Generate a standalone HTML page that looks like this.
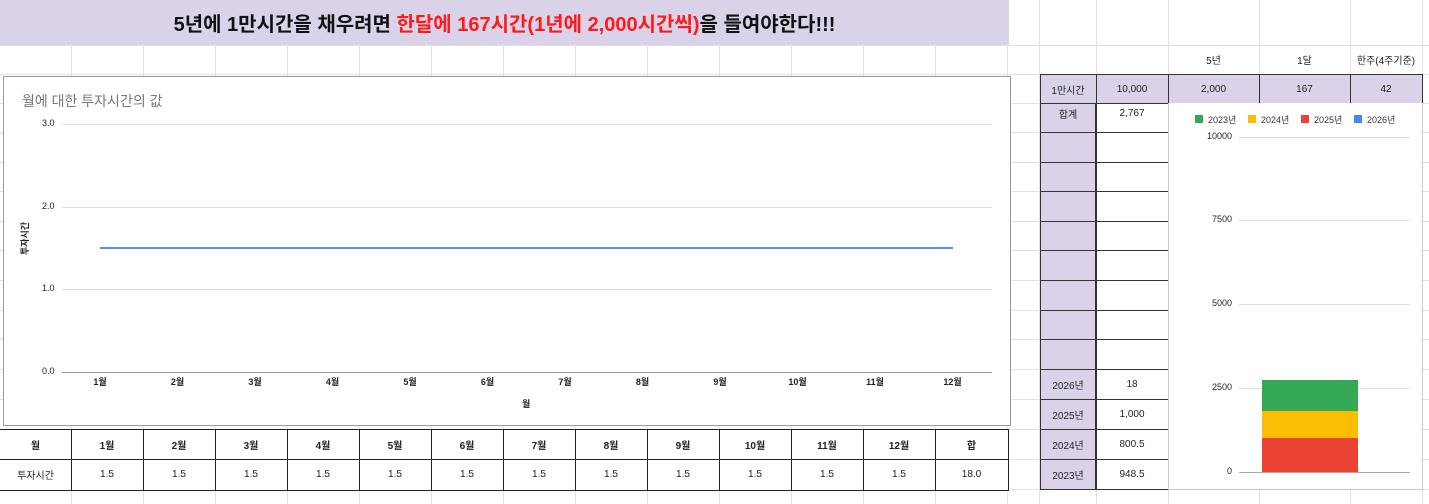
<!DOCTYPE html>
<html><head><meta charset="utf-8">
<style>
*{margin:0;padding:0;box-sizing:border-box}
body{width:1429px;height:504px;position:relative;overflow:hidden;background:#fff;font-family:"Liberation Sans","Noto Sans CJK KR",sans-serif;font-size:10px;color:#222}
.a{position:absolute}
.vl{position:absolute;top:0;width:1px;height:504px;background:#e2e2e2}
.hl{position:absolute;left:0;height:1px;width:1429px;background:#e2e2e2}
.c{position:absolute;display:flex;align-items:center;justify-content:center;font-size:10px}
.t{position:absolute;font-size:9px;color:#222;transform:translateX(-50%)}
</style></head><body>
<div id="g"></div>
<div class="a" style="left:0;top:0;width:1009px;height:45px;background:#d9d2e9;display:flex;align-items:center;justify-content:center;font-weight:bold;font-size:20px;color:#111">5년에 1만시간을 채우려면&nbsp;<span style="color:#ff1a1a">한달에 167시간(1년에 2,000시간씩)</span>을 들여야한다!!!</div>

<div class="a" style="left:3px;top:76px;width:1008px;height:350px;border:1px solid #9a9a9a;background:#fff"></div>
<div class="a" style="left:22px;top:91px;font-size:14px;color:#777">월에 대한 투자시간의 값</div>
<div id="lc"></div>
<div class="a" style="left:100px;top:247px;width:853px;height:2px;background:#5b8def"></div>
<div class="a" style="left:18px;top:255px;font-size:9px;transform:rotate(-90deg);transform-origin:left top;font-weight:bold">투자시간</div>
<div class="a" style="left:522px;top:397px;font-size:9px;font-weight:bold">월</div>

<div id="bt"></div>
<div id="rt"></div>

<div class="a" style="left:1168px;top:103px;width:255px;height:387px;background:#fff;border:1px solid #c8c8c8;border-top:none"></div>
<div id="rc"></div>
<div class="a" style="left:1262px;top:380px;width:96px;height:31px;background:#34a853"></div>
<div class="a" style="left:1262px;top:411px;width:96px;height:27px;background:#fbbc04"></div>
<div class="a" style="left:1262px;top:438px;width:96px;height:34px;background:#ea4335"></div>

<script>
var h='';
[71,143,215,287,359,431,503,575,647,719,791,863,935,1007,1039,1096,1168,1259,1350,1422].forEach(function(x){h+='<div class="vl" style="left:'+x+'px"></div>'});
[45,74,103,132,162,191,221,250,280,310,339,369,399,429,459,489].forEach(function(y){h+='<div class="hl" style="top:'+y+'px"></div>'});
document.getElementById('g').innerHTML=h;
h='';
[[124,'3.0'],[207,'2.0'],[289,'1.0'],[372,'0.0']].forEach(function(v,i){
 h+='<div class="a" style="left:62px;top:'+v[0]+'px;width:930px;height:1px;background:'+(i==3?'#999':'#e0e0e0')+'"></div>';
 h+='<div class="a" style="left:42px;top:'+(v[0]-6)+'px;font-size:9px">'+v[1]+'</div>';
});
for(var i=0;i<12;i++)h+='<div class="t" style="left:'+(100+i*77.5)+'px;top:375px;font-weight:bold">'+(i+1)+'월</div>';
document.getElementById('lc').innerHTML=h;
h='<div class="a" style="left:0;top:429px;width:1009px;height:62px;border-top:1px solid #222;border-bottom:1px solid #222;background:#fff"></div><div class="a" style="left:0;top:459px;width:1009px;height:1px;background:#222"></div>';
var xs=[0,71,143,215,287,359,431,503,575,647,719,791,863,935,1008];
var hdr=['월','1월','2월','3월','4월','5월','6월','7월','8월','9월','10월','11월','12월','합'];
for(i=0;i<14;i++){
 if(i>0)h+='<div class="a" style="left:'+xs[i]+'px;top:429px;width:1px;height:62px;background:#222"></div>';
 h+='<div class="c" style="left:'+xs[i]+'px;top:430px;width:'+(xs[i+1]-xs[i])+'px;height:29px;font-weight:bold">'+hdr[i]+'</div>';
 h+='<div class="c" style="left:'+xs[i]+'px;top:460px;width:'+(xs[i+1]-xs[i])+'px;height:29px">'+(i==0?'투자시간':i==13?'18.0':'1.5')+'</div>';
}
h+='<div class="a" style="left:1008px;top:429px;width:1px;height:62px;background:#222"></div>';
document.getElementById('bt').innerHTML=h;
h='';
h+='<div class="c" style="left:1168px;top:45px;width:91px;height:29px">5년</div><div class="c" style="left:1259px;top:45px;width:91px;height:29px">1달</div><div class="c" style="left:1350px;top:45px;width:72px;height:29px">한주(4주기준)</div>';
h+='<div class="a" style="left:1040px;top:103px;width:56px;height:387px;background:#d9d2e9;border:1px solid #333;border-top:none"></div>';
h+='<div class="a" style="left:1096px;top:103px;width:73px;height:387px;background:#fff;border-left:1px solid #333;border-right:1px solid #333;border-bottom:1px solid #333"></div>';
h+='<div class="a" style="left:1040px;top:74px;width:383px;height:30px;background:#d9d2e9;border:1px solid #333"></div>';
[1096,1168,1259,1350].forEach(function(x){h+='<div class="a" style="left:'+x+'px;top:74px;width:1px;height:30px;background:#333"></div>'});
[[1040,56,'1만시간'],[1096,72,'10,000'],[1168,91,'2,000'],[1259,91,'167'],[1350,72,'42']].forEach(function(c){h+='<div class="c" style="left:'+c[0]+'px;top:74px;width:'+c[1]+'px;height:30px">'+c[2]+'</div>'});
var ry=[103,132,162,191,221,250,280,310,339,369,399,429,459,489];
var lab={0:['합계','2,767'],9:['2026년','18'],10:['2025년','1,000'],11:['2024년','800.5'],12:['2023년','948.5']};
for(i=0;i<13;i++){
 if(i>0)h+='<div class="a" style="left:1040px;top:'+ry[i]+'px;width:129px;height:1px;background:#333"></div>';
 if(lab[i]){var o=(i==0?-4:0);h+='<div class="c" style="left:1040px;top:'+(ry[i]+o)+'px;width:56px;height:'+(ry[i+1]-ry[i])+'px">'+lab[i][0]+'</div><div class="c" style="left:1096px;top:'+(ry[i]+o)+'px;width:72px;height:'+(ry[i+1]-ry[i])+'px">'+lab[i][1]+'</div>';}
}
document.getElementById('rt').innerHTML=h;
h='';
[['#34a853','2023년',1195],['#fbbc04','2024년',1248],['#ea4335','2025년',1301],['#4285f4','2026년',1354]].forEach(function(l){h+='<div class="a" style="left:'+l[2]+'px;top:115px;width:8px;height:8px;background:'+l[0]+'"></div><div class="a" style="left:'+(l[2]+13)+'px;top:113px;font-size:9px;color:#333">'+l[1]+'</div>'});
[[137,'10000'],[220,'7500'],[304,'5000'],[388,'2500'],[472,'0']].forEach(function(v,i){
 h+='<div class="a" style="left:1239px;top:'+v[0]+'px;width:171px;height:1px;background:'+(i==4?'#aaa':'#e0e0e0')+'"></div>';
 h+='<div class="a" style="left:1170px;top:'+(v[0]-6)+'px;width:62px;text-align:right;font-size:9px">'+v[1]+'</div>';
});
document.getElementById('rc').innerHTML=h;
</script>
</body></html>
